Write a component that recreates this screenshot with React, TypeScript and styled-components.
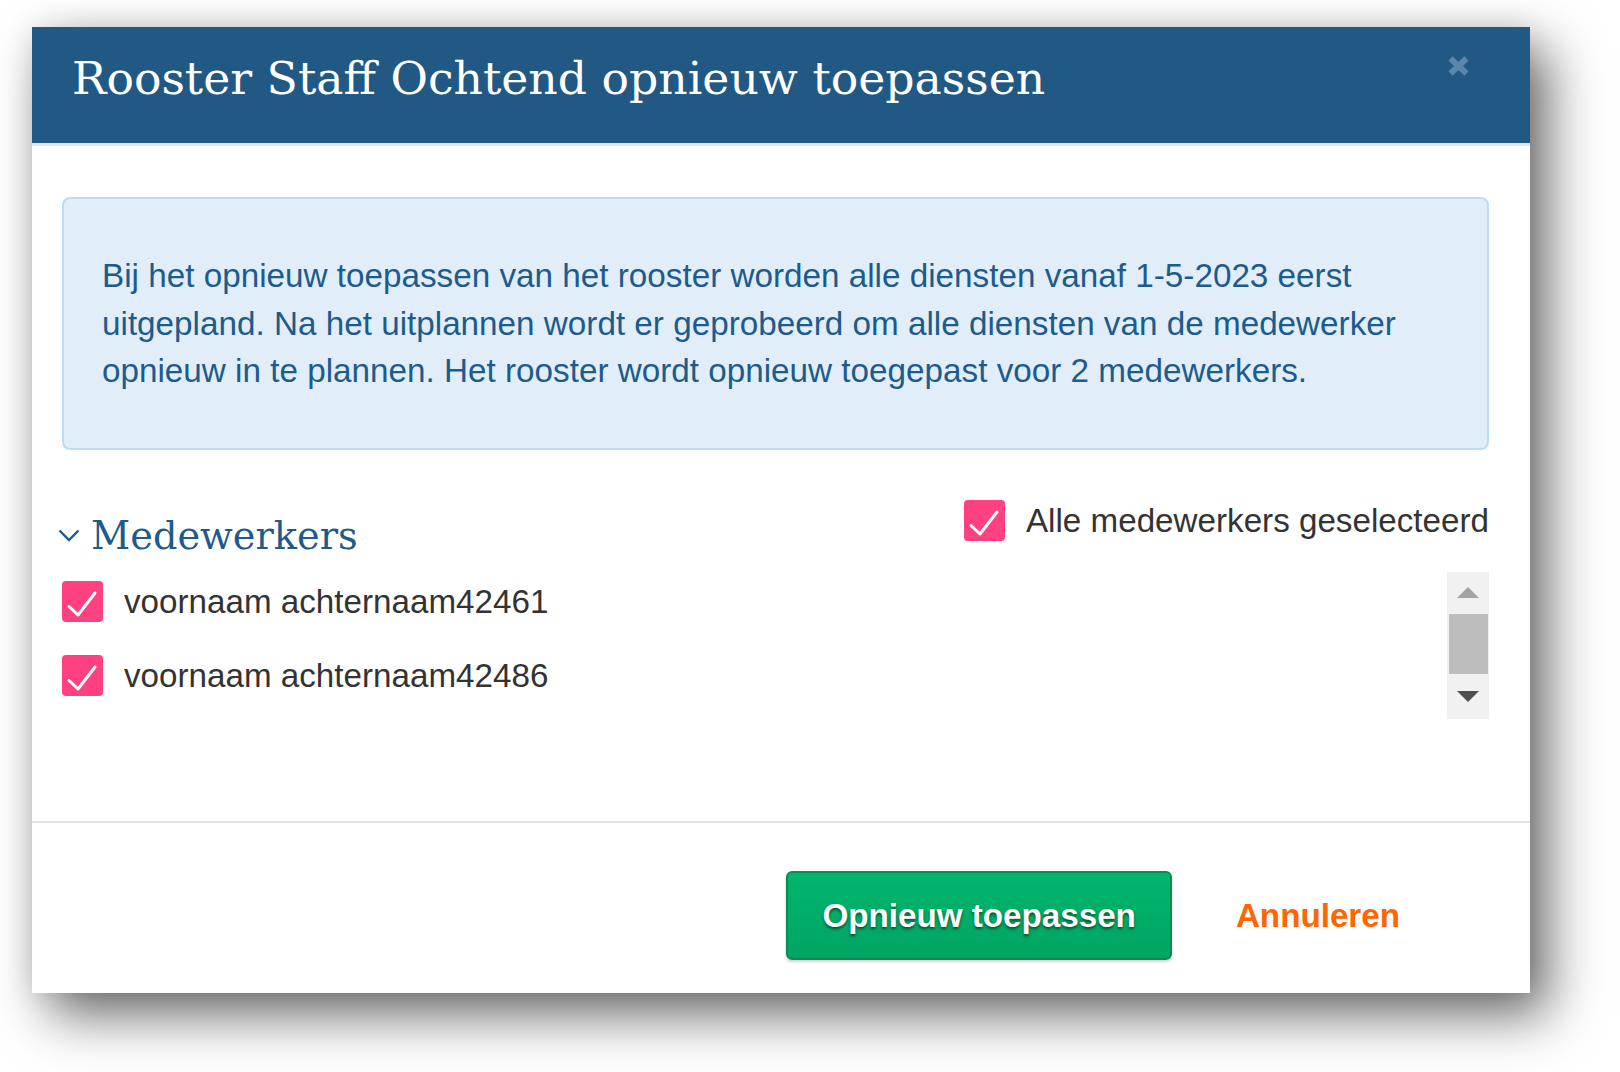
import React from "react";
import styled, { createGlobalStyle } from "styled-components";

const GlobalStyle = createGlobalStyle`
  html, body {
    margin: 0;
    padding: 0;
    background: #ffffff;
  }
  body {
    font-family: "Liberation Sans", Arial, sans-serif;
  }
  * { box-sizing: border-box; }
`;

const Page = styled.div`
  width: 1620px;
  height: 1072px;
  overflow: hidden;
  padding: 27px 0 0 32px;
`;

const Dialog = styled.div`
  width: 1498px;
  height: 966px;
  background: #ffffff;
  display: flex;
  flex-direction: column;
  box-shadow: 18px 22px 50px rgba(0, 0, 0, 0.58), 0 0 26px rgba(0, 0, 0, 0.1);
`;

const Header = styled.div`
  height: 119px;
  flex: none;
  background: #215884;
  border-bottom: 3px solid #e6e6e6;
  display: flex;
  justify-content: space-between;
  align-items: flex-start;
  padding: 0 60px 0 40px;
`;

const Title = styled.h1`
  margin: 29px 0 0 0;
  font-family: "DejaVu Serif", serif;
  font-weight: normal;
  font-size: 45.7px;
  line-height: 46px;
  color: #ffffff;
`;

const CloseButton = styled.button`
  margin-top: 28px;
  width: 23px;
  height: 22px;
  padding: 0;
  border: none;
  background: none;
  display: flex;
  cursor: pointer;
`;

const Body = styled.div`
  flex: 1;
  display: flex;
  flex-direction: column;
  padding: 51px 41px 0 30px;
`;

const InfoBox = styled.div`
  border: 2px solid #bcdcf3;
  background: #e1eefa;
  border-radius: 8px;
  padding: 53px 38px;
  font-size: 33.25px;
  line-height: 47.5px;
  color: #1d5b8c;
`;

const SectionHead = styled.div`
  margin-top: 50px;
  display: flex;
  justify-content: space-between;
  align-items: flex-start;
`;

const GroupToggle = styled.div`
  margin: 12px 0 0 -4px;
  display: flex;
  align-items: center;
  gap: 11px;
`;

const GroupTitle = styled.h2`
  margin: 0;
  font-family: "DejaVu Serif", serif;
  font-weight: normal;
  font-size: 38.3px;
  line-height: 47px;
  color: #1f5a8a;
`;

const CheckRow = styled.label`
  display: flex;
  align-items: center;
  gap: 21px;
  font-size: 33.2px;
  line-height: 41px;
  color: #333333;
`;

const Box = styled.span`
  width: 41px;
  height: 41px;
  flex: none;
  border-radius: 4px;
  background: #ff4081;
  display: flex;
`;

const ListArea = styled.div`
  margin-top: 13px;
  height: 147px;
  display: flex;
`;

const List = styled.div`
  flex: 1;
  padding-top: 9px;
  display: flex;
  flex-direction: column;
  gap: 33px;
`;

const Scrollbar = styled.div`
  width: 42px;
  background: #f1f1f1;
  display: flex;
  flex-direction: column;
  align-items: center;
`;

const ArrowZone = styled.div<{ $h: number }>`
  height: ${(p) => p.$h}px;
  width: 100%;
  display: flex;
  align-items: center;
  justify-content: center;
`;

const Arrow = styled.span<{ $dir: "up" | "down" }>`
  width: 0;
  height: 0;
  border-left: 11px solid transparent;
  border-right: 11px solid transparent;
  ${(p) =>
    p.$dir === "up"
      ? "border-bottom: 11px solid #a3a3a3;"
      : "border-top: 11px solid #505050;"}
`;

const Thumb = styled.div`
  width: 39px;
  height: 60px;
  background: #bdbdbd;
`;

const Footer = styled.div`
  height: 172px;
  flex: none;
  border-top: 2px solid #e3e3e3;
  display: flex;
  justify-content: flex-end;
  align-items: flex-start;
  gap: 64px;
  padding: 48px 130px 0 0;
`;

const PrimaryButton = styled.button`
  height: 89px;
  padding: 0 34px;
  border: 2px solid #078c54;
  border-radius: 6px;
  background: linear-gradient(#00b66d, #00a563);
  box-shadow: 0 2px 3px rgba(0, 0, 0, 0.18);
  color: #ffffff;
  font-family: "Liberation Sans", Arial, sans-serif;
  font-weight: bold;
  font-size: 33.2px;
  text-shadow: 0 2px 3px rgba(0, 50, 20, 0.75);
  cursor: pointer;
`;

const LinkButton = styled.button`
  height: 89px;
  padding: 0;
  border: none;
  background: none;
  color: #ff6600;
  font-family: "Liberation Sans", Arial, sans-serif;
  font-weight: bold;
  font-size: 33.2px;
  cursor: pointer;
`;

const CheckIcon = () => (
  <svg width="41" height="41" viewBox="0 0 41 41">
    <path
      d="M7 25.5 L16 34 L33 12"
      fill="none"
      stroke="#ffffff"
      strokeWidth="3"
      strokeLinecap="round"
      strokeLinejoin="round"
    />
  </svg>
);

const Checkbox = () => (
  <Box>
    <CheckIcon />
  </Box>
);

const employees = ["voornaam achternaam42461", "voornaam achternaam42486"];

export default function App() {
  return (
    <>
      <GlobalStyle />
      <Page>
        <Dialog>
          <Header>
            <Title>Rooster Staff Ochtend opnieuw toepassen</Title>
            <CloseButton aria-label="Sluiten">
              <svg width="23" height="22" viewBox="0 0 23 22">
                <path
                  d="M3.5 3.5 L19.5 18.5 M19.5 3.5 L3.5 18.5"
                  stroke="#5b87af"
                  strokeWidth="6"
                  strokeLinecap="butt"
                />
              </svg>
            </CloseButton>
          </Header>
          <Body>
            <InfoBox>
              Bij het opnieuw toepassen van het rooster worden alle diensten vanaf 1-5-2023 eerst
              <br />
              uitgepland. Na het uitplannen wordt er geprobeerd om alle diensten van de medewerker
              <br />
              opnieuw in te plannen. Het rooster wordt opnieuw toegepast voor 2 medewerkers.
            </InfoBox>
            <SectionHead>
              <GroupToggle>
                <svg width="22" height="13" viewBox="0 0 22 13">
                  <path
                    d="M1.5 1.5 L11 11 L20.5 1.5"
                    fill="none"
                    stroke="#1f5a8a"
                    strokeWidth="2.4"
                  />
                </svg>
                <GroupTitle>Medewerkers</GroupTitle>
              </GroupToggle>
              <CheckRow>
                <Checkbox />
                Alle medewerkers geselecteerd
              </CheckRow>
            </SectionHead>
            <ListArea>
              <List>
                {employees.map((name) => (
                  <CheckRow key={name}>
                    <Checkbox />
                    {name}
                  </CheckRow>
                ))}
              </List>
              <Scrollbar>
                <ArrowZone $h={42}>
                  <Arrow $dir="up" />
                </ArrowZone>
                <Thumb />
                <ArrowZone $h={45}>
                  <Arrow $dir="down" />
                </ArrowZone>
              </Scrollbar>
            </ListArea>
          </Body>
          <Footer>
            <PrimaryButton>Opnieuw toepassen</PrimaryButton>
            <LinkButton>Annuleren</LinkButton>
          </Footer>
        </Dialog>
      </Page>
    </>
  );
}
